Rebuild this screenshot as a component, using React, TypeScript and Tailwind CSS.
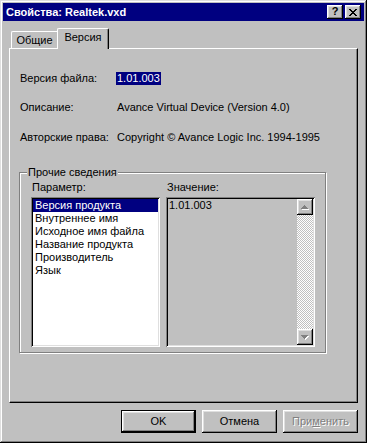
const raised = 'shadow-[inset_-1px_-1px_#000,inset_1px_1px_#fff,inset_-2px_-2px_#808080,inset_2px_2px_#dfdfdf]';
const sunken = 'shadow-[inset_1px_1px_#808080,inset_-1px_-1px_#fff,inset_2px_2px_#000,inset_-2px_-2px_#dfdfdf]';

const params = ['Версия продукта', 'Внутреннее имя', 'Исходное имя файла', 'Название продукта', 'Производитель', 'Язык'];

function CloseGlyph() {
  return (
    <svg width="8" height="7" viewBox="0 0 8 7" shapeRendering="crispEdges">
      <path
        fill="#000"
        d="M0 0h2v1h-2z M6 0h2v1h-2z M1 1h2v1h-2z M5 1h2v1h-2z M2 2h4v1h-4z M3 3h2v1h-2z M2 4h4v1h-4z M1 5h2v1h-2z M5 5h2v1h-2z M0 6h2v1h-2z M6 6h2v1h-2z"
      />
    </svg>
  );
}

function Arrow({ down }: { down?: boolean }) {
  const d = down
    ? 'M0 0h7v1h-7z M1 1h5v1h-5z M2 2h3v1h-3z M3 3h1v1h-1z'
    : 'M3 0h1v1h-1z M2 1h3v1h-3z M1 2h5v1h-5z M0 3h7v1h-7z';
  return (
    <svg width="8" height="5" viewBox="0 0 8 5" shapeRendering="crispEdges">
      <path d={d} fill="#fff" transform="translate(1 1)" />
      <path d={d} fill="#808080" />
    </svg>
  );
}

function CaptionButton({ children }: { children: React.ReactNode }) {
  return (
    <div className={`w-[16px] h-[14px] bg-[#c0c0c0] flex items-center justify-center ${raised}`}>
      {children}
    </div>
  );
}

export default function App() {
  return (
    <div className="w-[367px] h-[443px] bg-[#c0c0c0] p-[3px] flex flex-col font-['Liberation_Sans',Arial,sans-serif] text-[11px] leading-[13px] text-black shadow-[inset_-1px_-1px_#000,inset_1px_1px_#dfdfdf,inset_-2px_-2px_#808080,inset_2px_2px_#fff]">
      {/* Title bar */}
      <div className="h-[18px] bg-[#000080] flex items-center pl-[3px] pr-[3px] gap-[2px]">
        <span className="flex-1 text-white font-bold">Свойства: Realtek.vxd</span>
        <CaptionButton>
          <span className="font-bold text-[11px] leading-none -mt-px">?</span>
        </CaptionButton>
        <CaptionButton>
          <CloseGlyph />
        </CaptionButton>
      </div>

      <div className="px-[6px] pt-[7px] flex flex-col">
        {/* Tabs */}
        <div className="h-[20px] flex items-end pl-[2px]">
          <div className="w-[46px] h-[17px] border-l border-t border-white rounded-tl-[2px] text-center pt-[2px]">Общие</div>
          <div className="relative z-10 -mb-px w-[52px] h-[21px] bg-[#c0c0c0] border-l border-t border-r border-white border-r-black rounded-t-[2px] shadow-[inset_-1px_0_#808080] text-center pt-[2px]">
            Версия
          </div>
        </div>

        {/* Tab panel */}
        <div className="h-[355px] border border-white border-r-black border-b-black shadow-[inset_-1px_-1px_#808080] pl-[10px] pt-[23px] flex flex-col">
          <div className="flex h-[13px]">
            <span className="w-[97px]">Версия файла:</span>
            <span className="-ml-px px-px bg-[#000080] text-white">1.01.003</span>
          </div>
          <div className="flex h-[13px] mt-[16px]">
            <span className="w-[97px]">Описание:</span>
            <span>Avance Virtual Device (Version 4.0)</span>
          </div>
          <div className="flex h-[13px] mt-[17px]">
            <span className="w-[97px]">Авторские права:</span>
            <span>Copyright © Avance Logic Inc. 1994-1995</span>
          </div>

          {/* Group box */}
          <div className="relative mt-[28px] -ml-px w-[307px] h-[181px] border border-[#808080] shadow-[inset_1px_1px_#fff,1px_1px_#fff] pl-[11px] pt-[8px] pb-[5px] flex gap-[6px]">
            <span className="absolute left-[7px] top-[-7px] px-px bg-[#c0c0c0]">Прочие сведения</span>

            <div className="w-[129px] flex flex-col">
              <span className="pl-px h-[13px]">Параметр:</span>
              <div className={`mt-[3px] h-[150px] bg-white p-[2px] ${sunken}`}>
                {params.map((p, i) => (
                  <div key={p} className={`h-[13px] pl-[2px] ${i === 0 ? 'bg-[#000080] text-white' : ''}`}>
                    {p}
                  </div>
                ))}
              </div>
            </div>

            <div className="w-[149px] flex flex-col">
              <span className="pl-px h-[13px]">Значение:</span>
              <div className={`mt-[3px] h-[150px] bg-[#c0c0c0] p-[2px] flex ${sunken}`}>
                <div className="flex-1 pl-px">1.01.003</div>
                <div className="w-[16px] flex flex-col">
                  <div className={`h-[16px] flex items-center justify-center ${raised}`}>
                    <Arrow />
                  </div>
                  <div className="flex-1 bg-[image:repeating-conic-gradient(#fff_0_25%,#c0c0c0_0_50%)] bg-[length:2px_2px]" />
                  <div className={`h-[16px] flex items-center justify-center ${raised}`}>
                    <Arrow down />
                  </div>
                </div>
              </div>
            </div>
          </div>
        </div>

        {/* Buttons */}
        <div className="mt-[7px] flex justify-end gap-[6px]">
          <div className={`w-[75px] h-[23px] border border-black flex items-center justify-center ${raised}`}>OK</div>
          <div className={`w-[75px] h-[23px] flex items-center justify-center ${raised}`}>Отмена</div>
          <div className={`w-[75px] h-[23px] flex items-center justify-center text-[#808080] [text-shadow:1px_1px_0_#fff] ${raised}`}>
            <span>
              При<span className="underline">м</span>енить
            </span>
          </div>
        </div>
      </div>
    </div>
  );
}
